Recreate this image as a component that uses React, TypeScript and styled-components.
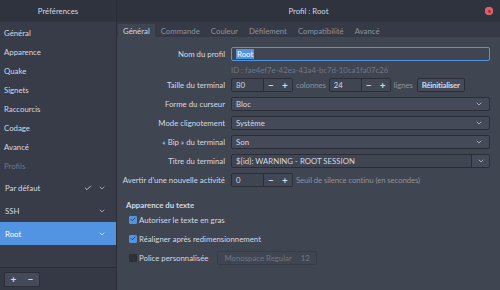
import React from 'react';
import styled, { createGlobalStyle } from 'styled-components';
import { Check, ChevronDown } from 'lucide-react';

const colors = {
  header: '#2f333d',
  sidebar: '#383c49',
  view: '#404552',
  tabBar: '#363a47',
  field: '#404552',
  button: '#444a58',
  border: '#2b2e38',
  text: '#d3dae3',
  dim: '#8b929e',
  faint: '#6f7684',
  blue: '#5294e2',
};

const GlobalStyle = createGlobalStyle`
  html, body {
    margin: 0;
    padding: 0;
    background: ${colors.view};
  }
  body {
    font-family: Lato, "Noto Sans", sans-serif;
    font-size: 7.8px;
    color: ${colors.text};
  }
`;

const Window = styled.div`
  width: 500px;
  height: 290px;
  display: flex;
  flex-direction: column;
  overflow: hidden;
  background: ${colors.view};
`;

const HeaderBar = styled.div`
  height: 22px;
  display: flex;
  background: ${colors.header};
  flex-shrink: 0;
`;

const HeaderLeft = styled.div`
  width: 116px;
  display: flex;
  align-items: center;
  justify-content: center;
  border-right: 1px solid ${colors.border};
  color: ${colors.text};
`;

const HeaderRight = styled.div`
  flex: 1;
  display: grid;
  grid-template-columns: 1fr auto 1fr;
  align-items: center;
`;

const HeaderTitle = styled.span`
  grid-column: 2;
`;

const CloseButton = styled.span`
  grid-column: 3;
  justify-self: end;
  margin-right: 7px;
  width: 8px;
  height: 8px;
  border-radius: 50%;
  background: #cc575d;
  box-shadow: inset 0 0 0 2px #e0626a;
  display: flex;
  align-items: center;
  justify-content: center;
  &::after {
    content: '';
    width: 3px;
    height: 3px;
    border-radius: 50%;
    background: #9b3b41;
  }
`;

const Body = styled.div`
  flex: 1;
  display: flex;
  min-height: 0;
`;

const Sidebar = styled.div`
  width: 116px;
  display: flex;
  flex-direction: column;
  background: ${colors.sidebar};
  border-right: 1px solid ${colors.border};
  flex-shrink: 0;
`;

const NavList = styled.div`
  display: flex;
  flex-direction: column;
  padding-top: 1px;
`;

const NavItem = styled.div`
  height: 19px;
  display: flex;
  align-items: center;
  padding-left: 4px;
`;

const SectionLabel = styled.div`
  height: 20px;
  display: flex;
  align-items: center;
  padding-left: 4px;
  color: ${colors.faint};
`;

const ProfileRow = styled.div<{ $selected?: boolean }>`
  height: 23px;
  display: flex;
  align-items: center;
  padding: 0 10px 0 5px;
  gap: 6px;
  background: ${(p) => (p.$selected ? colors.blue : 'transparent')};
  color: ${(p) => (p.$selected ? '#ffffff' : colors.text)};
`;

const ProfileName = styled.span`
  flex: 1;
`;

const SidebarFill = styled.div`
  flex: 1;
`;

const BottomBar = styled.div`
  height: 22px;
  display: flex;
  align-items: center;
  padding-left: 4px;
  background: #353945;
  border-top: 1px solid ${colors.border};
`;

const ButtonGroup = styled.div`
  display: flex;
  height: 13px;
  border: 1px solid ${colors.border};
  border-radius: 2px;
  background: ${colors.button};
`;

const GroupButton = styled.span`
  width: 17px;
  display: flex;
  align-items: center;
  justify-content: center;
  font-size: 10px;
  font-weight: bold;
`;

const Main = styled.div`
  flex: 1;
  display: flex;
  flex-direction: column;
  background: ${colors.view};
`;

const TabBar = styled.div`
  height: 15px;
  display: flex;
  align-items: flex-end;
  padding-left: 1px;
  background: ${colors.tabBar};
`;

const Tab = styled.div<{ $active?: boolean }>`
  height: 13px;
  display: flex;
  align-items: center;
  padding: 0 5px;
  margin-right: 1px;
  background: ${(p) => (p.$active ? colors.view : 'transparent')};
  color: ${(p) => (p.$active ? colors.text : colors.dim)};
  border-radius: 1px 1px 0 0;
`;

const Form = styled.div`
  display: grid;
  grid-template-columns: 99px 1fr;
  column-gap: 6px;
  row-gap: 5px;
  padding: 10px 10px 0 9px;
  align-items: center;
`;

const Label = styled.span`
  justify-self: end;
  white-space: nowrap;
`;

const Field = styled.div<{ $focus?: boolean }>`
  height: 14px;
  box-sizing: border-box;
  display: flex;
  align-items: center;
  padding: 0 4px;
  background: ${colors.field};
  border: 1px solid ${(p) => (p.$focus ? colors.blue : colors.border)};
  border-radius: 2px;
`;

const Selected = styled.span`
  background: ${colors.blue};
  color: #ffffff;
  padding: 0 1px;
`;

const IdText = styled.span`
  grid-column: 2;
  color: ${colors.faint};
  margin: -1px 0 -2px;
`;

const Inline = styled.div`
  display: flex;
  align-items: center;
  gap: 3px;
`;

const Spin = styled.div`
  display: flex;
  height: 14px;
  box-sizing: border-box;
  border: 1px solid ${colors.border};
  border-radius: 2px;
  background: ${colors.field};
`;

const SpinValue = styled.span`
  width: 27px;
  display: flex;
  align-items: center;
  padding-left: 4px;
  border-right: 1px solid ${colors.border};
`;

const SpinButton = styled.span`
  width: 14px;
  display: flex;
  align-items: center;
  justify-content: center;
  font-size: 10px;
  font-weight: bold;
  background: #424754;
`;

const Hint = styled.span`
  color: ${colors.dim};
  letter-spacing: -0.1px;
`;

const PushButton = styled.span`
  height: 14px;
  box-sizing: border-box;
  display: flex;
  align-items: center;
  padding: 0 4px;
  margin-left: 1px;
  background: ${colors.button};
  border: 1px solid ${colors.border};
  border-radius: 2px;
  font-weight: bold;
  letter-spacing: -0.2px;
`;

const Combo = styled.div`
  height: 14px;
  box-sizing: border-box;
  display: flex;
  align-items: center;
  justify-content: space-between;
  padding: 0 6px 0 4px;
  background: ${colors.button};
  border: 1px solid ${colors.border};
  border-radius: 2px;
`;

const EntryCombo = styled.div`
  height: 14px;
  box-sizing: border-box;
  display: flex;
  background: ${colors.field};
  border: 1px solid ${colors.border};
  border-radius: 2px;
`;

const EntryText = styled.span`
  flex: 1;
  display: flex;
  align-items: center;
  padding-left: 4px;
`;

const EntryArrow = styled.span`
  width: 17px;
  display: flex;
  align-items: center;
  justify-content: center;
  border-left: 1px solid ${colors.border};
  background: ${colors.button};
`;

const Section = styled.div`
  display: flex;
  flex-direction: column;
  padding: 13px 0 0 9px;
`;

const SectionTitle = styled.div`
  font-weight: bold;
`;

const CheckRow = styled.div`
  height: 19px;
  display: flex;
  align-items: center;
  padding-left: 3px;
`;

const CheckBox = styled.span<{ $checked?: boolean }>`
  width: 8px;
  height: 8px;
  box-sizing: border-box;
  margin-right: 2px;
  display: flex;
  align-items: center;
  justify-content: center;
  border-radius: 1px;
  background: ${(p) => (p.$checked ? colors.blue : '#2d313b')};
  border: 1px solid ${(p) => (p.$checked ? colors.blue : colors.border)};
  color: #2b3f5c;
`;

const FontButton = styled.span`
  height: 14px;
  box-sizing: border-box;
  display: flex;
  align-items: center;
  gap: 9px;
  margin-left: 9px;
  padding: 0 6px;
  color: ${colors.faint};
  border: 1px solid #393d49;
  border-radius: 2px;
`;

const navItems = ['Général', 'Apparence', 'Quake', 'Signets', 'Raccourcis', 'Codage', 'Avancé'];
const tabs = ['Général', 'Commande', 'Couleur', 'Défilement', 'Compatibilité', 'Avancé'];

const Chevron = () => <ChevronDown size={8} strokeWidth={2} />;

const Spinner: React.FC<{ value: string }> = ({ value }) => (
  <Spin>
    <SpinValue>{value}</SpinValue>
    <SpinButton>−</SpinButton>
    <SpinButton>+</SpinButton>
  </Spin>
);

export default function App() {
  return (
    <>
      <GlobalStyle />
      <Window>
        <HeaderBar>
          <HeaderLeft>Préférences</HeaderLeft>
          <HeaderRight>
            <HeaderTitle>Profil : Root</HeaderTitle>
            <CloseButton />
          </HeaderRight>
        </HeaderBar>
        <Body>
          <Sidebar>
            <NavList>
              {navItems.map((item) => (
                <NavItem key={item}>{item}</NavItem>
              ))}
            </NavList>
            <SectionLabel>Profils</SectionLabel>
            <ProfileRow>
              <ProfileName>Par défaut</ProfileName>
              <Check size={8} strokeWidth={2.5} />
              <Chevron />
            </ProfileRow>
            <ProfileRow>
              <ProfileName>SSH</ProfileName>
              <Chevron />
            </ProfileRow>
            <ProfileRow $selected>
              <ProfileName>Root</ProfileName>
              <Chevron />
            </ProfileRow>
            <SidebarFill />
            <BottomBar>
              <ButtonGroup>
                <GroupButton>+</GroupButton>
                <GroupButton>−</GroupButton>
              </ButtonGroup>
            </BottomBar>
          </Sidebar>
          <Main>
            <TabBar>
              {tabs.map((tab, i) => (
                <Tab key={tab} $active={i === 0}>
                  {tab}
                </Tab>
              ))}
            </TabBar>
            <Form>
              <Label>Nom du profil</Label>
              <Field $focus>
                <Selected>Root</Selected>
              </Field>
              <IdText>ID : fae4ef7e-42ea-43a4-bc7d-10ca1fa07c26</IdText>
              <Label>Taille du terminal</Label>
              <Inline>
                <Spinner value="80" />
                <Hint>colonnes</Hint>
                <Spinner value="24" />
                <Hint>lignes</Hint>
                <PushButton>Réinitialiser</PushButton>
              </Inline>
              <Label>Forme du curseur</Label>
              <Combo>
                Bloc
                <Chevron />
              </Combo>
              <Label>Mode clignotement</Label>
              <Combo>
                Système
                <Chevron />
              </Combo>
              <Label>« Bip » du terminal</Label>
              <Combo>
                Son
                <Chevron />
              </Combo>
              <Label>Titre du terminal</Label>
              <EntryCombo>
                <EntryText>${'{id}'}: WARNING - ROOT SESSION</EntryText>
                <EntryArrow>
                  <Chevron />
                </EntryArrow>
              </EntryCombo>
              <Label>Avertir d'une nouvelle activité</Label>
              <Inline>
                <Spinner value="0" />
                <Hint>Seuil de silence continu (en secondes)</Hint>
              </Inline>
            </Form>
            <Section>
              <SectionTitle>Apparence du texte</SectionTitle>
              <CheckRow>
                <CheckBox $checked>
                  <Check size={7} strokeWidth={3.5} />
                </CheckBox>
                Autoriser le texte en gras
              </CheckRow>
              <CheckRow>
                <CheckBox $checked>
                  <Check size={7} strokeWidth={3.5} />
                </CheckBox>
                Réaligner après redimensionnement
              </CheckRow>
              <CheckRow>
                <CheckBox />
                Police personnalisée
                <FontButton>
                  <span>Monospace Regular</span>
                  <span>12</span>
                </FontButton>
              </CheckRow>
            </Section>
          </Main>
        </Body>
      </Window>
    </>
  );
}
